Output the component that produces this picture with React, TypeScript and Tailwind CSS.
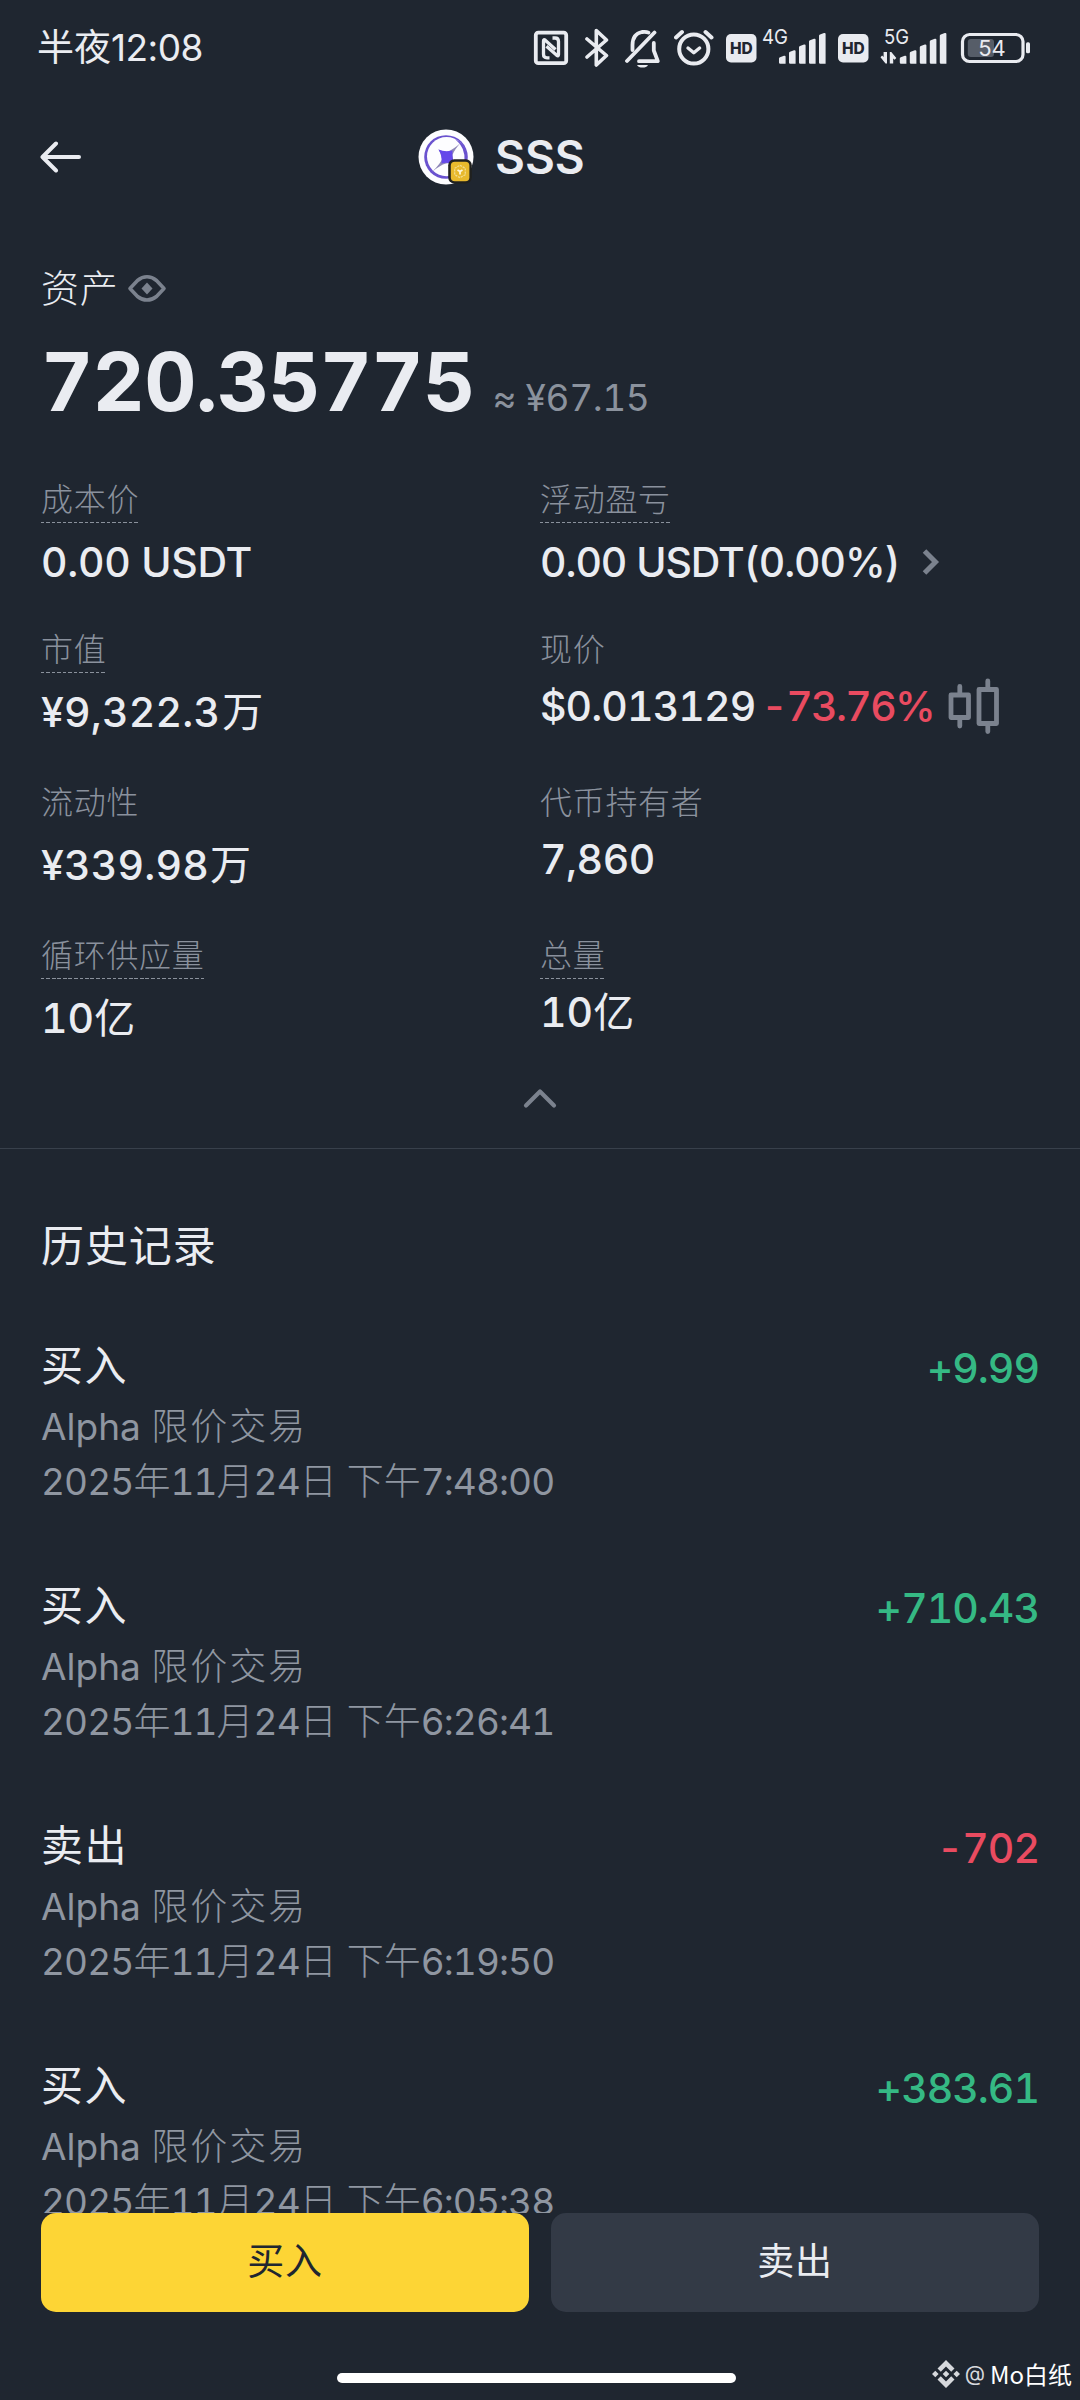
import type { ReactNode } from 'react';

const FG = '#e9ebf0';
const MUTED = '#7b828e';

function Signal({ x }: { x: number }) {
  const tops = [56, 50.5, 44.7, 39, 33.3];
  return (
    <g fill={FG}>
      {tops.map((t, i) => (
        <path key={t} d={`M${x + i * 10} ${t + 2.5} q0 -1 1 -1.3 l4 -1.4 q1.6 -.4 1.6 1 V63.8 h-5.4 q-1.2 0 -1.2 -1.2 Z`} />
      ))}
    </g>
  );
}

function Hd({ x }: { x: number }) {
  return (
    <g>
      <rect x={x} y="34" width="30.5" height="28.4" rx="5" fill={FG} />
      <text x={x + 15.3} y="54" textAnchor="middle" fontFamily="Inter, sans-serif" fontWeight="800" fontSize="15.5" fill="#1f2630">
        HD
      </text>
    </g>
  );
}

function StatusIcons() {
  return (
    <div className="flex h-24 items-center">
      <svg className="mr-[16px] h-24 w-[36px]" viewBox="533 0 36 96" fill="none" stroke={FG}>
        <rect x="535.8" y="32.6" width="30.4" height="30.6" rx="2.5" strokeWidth="3.8" />
        <path d="M549.5 57.800h-2.500q-3.500 0-3.500-3.500V41q0-2 1.800-.8l10.200 9.300" strokeWidth="3.300" />
        <path d="M552.500 38h2.500q3.500 0 3.500 3.500V54.500q0 2-1.800.8l-10.200-9" strokeWidth="3.300" />
      </svg>
      <svg className="mr-[14px] h-24 w-[26px]" viewBox="585 0 26 96" fill="none" stroke={FG} strokeWidth="3.600" strokeLinecap="round" strokeLinejoin="round">
        <path d="M587 39l19.5 16.5L596.3 65V30.5l10.2 9.5L587 57" />
      </svg>
      <svg className="mr-[12px] h-24 w-[37px]" viewBox="625 0 37 96" fill="none" stroke={FG} strokeWidth="3.800" strokeLinecap="round" strokeLinejoin="round">
        <path d="M627 61L654.5 32.5" />
        <path d="M632.5 50V45q0-11 9.500-13 4-.6 6.500.6M653.800 43v7.500l4 10.700H639" />
        <path d="M637 65h11q-1.500 2.600-5.500 2.600t-5.500-2.600z" fill={FG} stroke="none" />
      </svg>
      <svg className="mr-[12px] h-24 w-[40px]" viewBox="674 0 40 96" fill="none" stroke={FG} strokeWidth="4" strokeLinecap="round" strokeLinejoin="round">
        <circle cx="693.8" cy="49" r="14.6" />
        <path d="M688 48l5.800 4.800 5.800-4.800" strokeWidth="3.400" />
        <path d="M676 37.500l6-5.500M711.500 37.500l-6-5.500" />
      </svg>
      <svg className="mr-[10px] h-24 w-[102px]" viewBox="726 0 102 96">
        <Hd x={726} />
        <text x="762" y="44.3" fontFamily="Inter, sans-serif" fontSize="20.500" fill={FG} textLength="26" lengthAdjust="spacingAndGlyphs">4G</text>
        <Signal x={779} />
      </svg>
      <svg className="mr-[12px] h-24 w-[110px]" viewBox="838 0 110 96">
        <Hd x={838} />
        <text x="884" y="44.3" fontFamily="Inter, sans-serif" fontSize="20.500" fill={FG} textLength="25" lengthAdjust="spacingAndGlyphs">5G</text>
        <path d="M887 52v11.600h-1.500l-5-6.400 1.600-1.600 1.500 1.400V52zM889.800 63.600V52h1.500l5 6-1.600 1.800-1.500-1.400v5.200z" fill={FG} />
        <Signal x={899.8} />
      </svg>
      <svg className="h-24 w-[72px]" viewBox="960 0 72 96">
        <rect x="962.5" y="34.5" width="60.500" height="27" rx="7" fill="none" stroke={FG} strokeWidth="3.200" />
        <rect x="967.8" y="39" width="26.200" height="18" rx="3" fill="#565d68" />
        <rect x="1026" y="42.3" width="4" height="11" rx="1.600" fill={FG} />
        <text x="992" y="56.3" textAnchor="middle" fontFamily="Inter, sans-serif" fontSize="22" fill={FG}>54</text>
      </svg>
    </div>
  );
}

function TokenLogo() {
  return (
    <svg className="h-[56px] w-[56px]" viewBox="0 0 56 56">
      <circle cx="28" cy="28" r="27.500" fill="#fdfdff" />
      <circle cx="28" cy="28" r="21.800" fill="#6a52cf" />
      <circle cx="28.600" cy="27.600" r="19.600" fill="#fdfdff" />
      <path d="M14 43Q23 34 24 30 23.500 25 20.500 20.500 26 23.500 30 22.500 36 20 43 13.500 36 21 34.500 26 34.500 31 37 35.500 32 33 28 34.500 22 36 14 43Z" fill="#8f88b8" />
      <path d="M20.500 20.500Q27 23.500 34.500 21.500 33.500 29 37 36 30 32.500 23.500 34.500 24.500 27 20.500 20.500Z" fill="#6548ea" />
      <path d="M37 10Q50 16 49 32L46.500 33Q48 19 37 10Z" fill="#6a52cf" />
      <rect x="30.200" y="30.200" width="23.600" height="24.400" rx="6" fill="#20211f" />
      <rect x="32.800" y="32.800" width="18.600" height="19.400" rx="4" fill="#e8b92c" />
      <g fill="none" stroke="#f3dc8c" strokeWidth="1.300">
        <path d="M42 36.300l5.300 3v6.400l-5.300 3-5.300-3v-6.400z" strokeDasharray="2.200 .9" />
        <path d="M39.500 41l2.500 1.500 2.500-1.500M42 42.500v3" strokeWidth="1.800" stroke="#fff6d8" />
      </g>
    </svg>
  );
}

function Cjk({ children, className }: { children: ReactNode; className: string }) {
  return <span className={className}>{children}</span>;
}

type CellProps = { label: string; underline?: boolean; high?: boolean; children: ReactNode };

function Cell({ label, underline, high, children }: CellProps) {
  return (
    <div>
      <div className="flex h-11 w-fit flex-col justify-between">
        <span className="text-[32px] leading-[41px] font-light tracking-[0.700px] text-[#8a919d]">{label}</span>
        {underline && <span className="h-px bg-[repeating-linear-gradient(90deg,#8a919c_0px,#8a919c_3.500px,transparent_3.500px,transparent_5.500px)]" />}
      </div>
      <div className={`flex h-10 items-center text-[41px] leading-[40px] font-medium whitespace-nowrap tabular-nums ${high ? 'mt-[13px]' : 'mt-[19px]'}`}>
        {children}
      </div>
    </div>
  );
}

const history = [
  { side: '买入', time: '7:48:00', amount: '+9.99', up: true },
  { side: '买入', time: '6:26:41', amount: '+710.43', up: true },
  { side: '卖出', time: '6:19:50', amount: '-702', up: false },
  { side: '买入', time: '6:05:38', amount: '+383.61', up: true },
];

export default function App() {
  return (
    <div className="flex h-[2400px] w-[1080px] flex-col overflow-hidden bg-[#1f2630] font-['Inter','Noto_Sans_CJK_SC',sans-serif] text-[#eaecf1]">
      <div className="flex h-24 shrink-0 items-center justify-between pr-[48px] pl-[37px]">
        <div className="flex text-[37px] leading-[40px]">
          <Cjk className="font-normal">半夜</Cjk>
          <span className="tracking-[-0.500px]">12:08</span>
        </div>
        <StatusIcons />
      </div>

      <header className="relative flex h-[121px] shrink-0 items-center pl-[418px]">
        <svg className="absolute left-10 h-8 w-[42px]" viewBox="0 0 42 32" fill="none" stroke="#eaecf1" strokeWidth="4" strokeLinecap="round" strokeLinejoin="round">
          <path d="M39 16H3M16 2.500L2.500 16 16 29.500" />
        </svg>
        <TokenLogo />
        <h1 className="ml-[21px] text-[46px] leading-[50px] font-semibold">SSS</h1>
      </header>

      <section className="shrink-0 px-[41px] pt-[51px]">
        <div className="flex h-10 items-center">
          <span className="text-[38px] leading-[40px] font-light tracking-[0.800px]">资产</span>
          <svg className="ml-[8px] h-7 w-10" viewBox="0 0 40 28" fill="none" stroke={MUTED} strokeWidth="3.600" strokeLinejoin="round">
            <path d="M3 14.500L10.500 6.500Q15 2.800 20 2.800T29.500 6.500L37 14.500 29.500 22.500Q25 26 20 26T10.500 22.500Z" />
            <path d="M20 8.500l5.500 6-5.500 6-5.500-6z" fill={MUTED} stroke="none" />
          </svg>
        </div>
        <div className="mt-[34px] flex h-20 items-baseline leading-[80px] tabular-nums">
          <span className="text-[81px] font-bold tracking-[-0.800px]">720.35775</span>
          <span className="ml-[18px] text-[37px] tracking-[-0.400px] text-[#8b929d]">≈ ¥67.15</span>
        </div>

        <div className="mt-[57px] grid grid-cols-[499px_1fr] grid-rows-[150px_153px_153px_120px]">
          <Cell label="成本价" underline>
            <span className="tracking-[-0.300px]">0.00 USDT</span>
          </Cell>
          <Cell label="浮动盈亏" underline>
            <span className="tracking-[-1.100px]">0.00 USDT(0.00%)</span>
            <svg className="ml-[21px] h-7 w-5" viewBox="0 0 20 28" fill="none" stroke={MUTED} strokeWidth="5">
              <path d="M3.500 3l11 11-11 11" />
            </svg>
          </Cell>
          <Cell label="市值" underline>
            <span className="tracking-[0.200px]">¥9,322.3</span>
            <Cjk className="ml-[2px] font-normal">万</Cjk>
          </Cell>
          <Cell label="现价" high>
            <span className="tracking-[-0.900px]">$0.013129</span>
            <span className="ml-[6px] tracking-[-1.700px] text-[#e94b60]">-73.76%</span>
            <svg className="ml-[14px] h-14 w-[52px] shrink-0" viewBox="0 0 52 56" fill="none" stroke={MUTED} strokeWidth="4.800" strokeLinecap="round" strokeLinejoin="round">
              <rect x="3" y="17" width="17.500" height="22.500" />
              <path d="M11.800 16V8.500M11.800 40.500V48" />
              <rect x="31" y="11.500" width="17.500" height="34" />
              <path d="M39.800 10V3M39.800 47v6.500" />
            </svg>
          </Cell>
          <Cell label="流动性">
            <span className="tracking-[0.200px]">¥339.98</span>
            <Cjk className="ml-px font-normal">万</Cjk>
          </Cell>
          <Cell label="代币持有者" high>
            <span className="tracking-[-0.500px]">7,860</span>
          </Cell>
          <Cell label="循环供应量" underline>
            10<Cjk className="font-normal">亿</Cjk>
          </Cell>
          <Cell label="总量" underline high>
            10<Cjk className="font-normal">亿</Cjk>
          </Cell>
        </div>
      </section>

      <div className="flex h-[94px] shrink-0 justify-center border-b border-[#38404b] pt-[32px]">
        <svg className="h-[22px] w-[36px]" viewBox="0 0 36 22" fill="none" stroke={MUTED} strokeWidth="4.200" strokeLinecap="round" strokeLinejoin="round">
          <path d="M4 18.500L18 4.500l14 14" />
        </svg>
      </div>

      <section className="min-h-0 flex-1 overflow-hidden px-[41px] pt-[72px]">
        <h2 className="text-[43px] leading-[50px] font-normal tracking-[0.900px]">历史记录</h2>
        <ul className="mt-[70px]">
          {history.map((h) => (
            <li key={h.time} className="flex h-60 justify-between">
              <div>
                <p className="text-[42px] leading-[50px] font-normal tracking-[1.400px]">{h.side}</p>
                <div className="mt-[8px] flex h-[56px] items-center text-[37px] leading-[50px] whitespace-pre text-[#8f96a1]">
                  Alpha <Cjk className="font-light tracking-[2px]">限价交易</Cjk>
                </div>
                <div className="flex h-[54px] items-center text-[37px] leading-[50px] tracking-[-0.900px] whitespace-pre text-[#8f96a1] tabular-nums">
                  2025<Cjk className="font-light tracking-normal">年</Cjk>11<Cjk className="font-light tracking-normal">月</Cjk>24
                  <Cjk className="font-light tracking-normal">日 下午</Cjk>
                  {h.time}
                </div>
              </div>
              <span className={`mt-[2px] text-[41px] leading-[50px] font-medium tracking-[-1px] tabular-nums ${h.up ? 'text-[#35b984]' : 'text-[#e94b60]'}`}>{h.amount}</span>
            </li>
          ))}
        </ul>
      </section>

      <footer className="h-[187px] shrink-0 px-[41px]">
        <div className="grid h-[99px] grid-cols-2 gap-[22px] text-[37px] tracking-[0.800px]">
          <button className="rounded-[15px] bg-[#fdd535] pb-[2px] text-[#202630]">买入</button>
          <button className="rounded-[15px] bg-[#333a46] pb-[2px]">卖出</button>
        </div>
        <div className="relative flex h-[88px] justify-center">
          <span className="mt-[61px] mr-[7px] h-[10px] w-[399px] rounded-full bg-white" />
          <div className="absolute top-[44px] right-[-33px] flex h-[36px] items-center text-[24px] leading-[36px] whitespace-nowrap text-white">
            <svg className="mr-[5px] h-7 w-7" viewBox="0 0 28 28" fill="#d6d8dc">
              <path d="M14 0l8.500 8.500-3.300 3.300L14 6.600l-5.200 5.200-3.300-3.300zM14 28l-8.500-8.500 3.300-3.300L14 21.400l5.200-5.200 3.300 3.300zM14 10.700l3.300 3.300-3.300 3.300-3.300-3.300zM3.300 10.700L6.600 14l-3.300 3.300L0 14zM24.700 10.700L28 14l-3.300 3.300-3.300-3.300z" />
            </svg>
            <span className="mr-[5px] text-[21px] text-[#d6d8dc]">@</span>
            <span className="font-['Noto_Sans_CJK_SC',sans-serif] font-normal">Mo白纸</span>
          </div>
        </div>
      </footer>
    </div>
  );
}
